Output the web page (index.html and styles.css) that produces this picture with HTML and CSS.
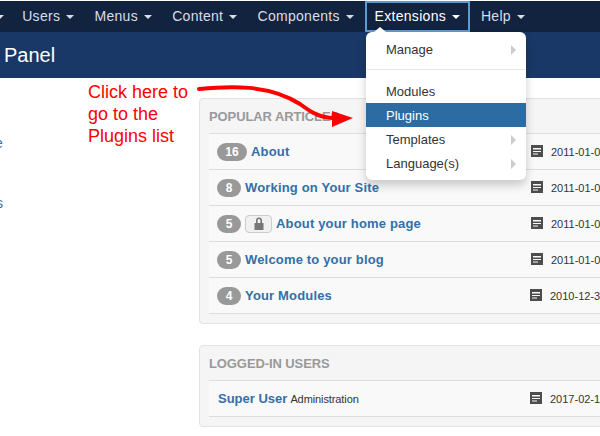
FILE: index.html
```html
<!DOCTYPE html>
<html lang="en">
<head>
<meta charset="utf-8">
<title>Control Panel</title>
<link rel="stylesheet" href="styles.css">
</head>
<body>
<div class="page">
  <nav class="nav">
    <span class="nav-stub"><b class="caret"></b></span>
    <a class="nav-item">Users <b class="caret"></b></a>
    <a class="nav-item">Menus <b class="caret"></b></a>
    <a class="nav-item">Content <b class="caret"></b></a>
    <a class="nav-item">Components <b class="caret"></b></a>
    <a class="nav-item active">Extensions <b class="caret"></b></a>
    <a class="nav-item last">Help <b class="caret"></b></a>
  </nav>
  <header class="subhead"><h1>Panel</h1></header>
  <main class="main">
    <aside class="side">
      <div class="side-a">e</div>
      <div class="side-b">s</div>
    </aside>
    <div class="content">
      <section class="panel">
        <h2>POPULAR ARTICLES</h2>
        <div class="row"><span class="row-main"><span class="badge wide">16</span><a>About</a></span><span class="date"><svg class="doc" viewBox="0 0 12 12"><use href="#news"/></svg>2011-01-01 12:00</span></div>
        <div class="row"><span class="row-main"><span class="badge">8</span><a>Working on Your Site</a></span><span class="date"><svg class="doc" viewBox="0 0 12 12"><use href="#news"/></svg>2011-01-01 12:00</span></div>
        <div class="row"><span class="row-main"><span class="badge">5</span><span class="lock"><svg viewBox="0 0 10 13"><path d="M2 6V3.500a3 3 0 0 1 6 0V6H9.500v7H.5V6zM3.600 6h2.800V3.500a1.400 1.400 0 0 0-2.800 0z" fill="#777" fill-rule="evenodd"/></svg></span><a>About your home page</a></span><span class="date"><svg class="doc" viewBox="0 0 12 12"><use href="#news"/></svg>2011-01-01 12:00</span></div>
        <div class="row"><span class="row-main"><span class="badge">5</span><a>Welcome to your blog</a></span><span class="date"><svg class="doc" viewBox="0 0 12 12"><use href="#news"/></svg>2011-01-01 12:00</span></div>
        <div class="row"><span class="row-main"><span class="badge">4</span><a>Your Modules</a></span><span class="date shift"><svg class="doc" viewBox="0 0 12 12"><use href="#news"/></svg>2010-12-31 12:00</span></div>
      </section>
      <section class="panel">
        <h2>LOGGED-IN USERS</h2>
        <div class="row user"><span class="row-main"><a>Super User</a><small>Administration</small></span><span class="date shift"><svg class="doc" viewBox="0 0 12 12"><use href="#news"/></svg>2017-02-16 12:00</span></div>
      </section>
    </div>
  </main>

  <ul class="menu">
    <li class="has-sub">Manage</li>
    <li class="divider"></li>
    <li>Modules</li>
    <li class="selected">Plugins</li>
    <li class="has-sub">Templates</li>
    <li class="has-sub">Language(s)</li>
  </ul>

  <div class="note">Click here to<br>go to the<br>Plugins list</div>
  <svg class="arrow" viewBox="0 0 170 50" width="170" height="50">
    <path d="M2 4C32 1 72 -1 103 19C115 28 124 33 137 33" fill="none" stroke="#f00" stroke-width="4" stroke-linecap="round"/>
    <path d="M135 26L156 33L135 42z" fill="#f00"/>
  </svg>
</div>
<svg width="0" height="0" class="defs"><defs>
  <g id="news"><path d="M0 0H12V12H0zM2 3V4.500H10V3zM2 6V7H10V6zM2 8.500V9.500H7V8.500z" fill="#4d4d4d" fill-rule="evenodd"/></g>
</defs></svg>
</body>
</html>
```
FILE: styles.css
```css
* { box-sizing: border-box; }
html, body { margin: 0; padding: 0; background: #fff; }
body { font-family: "Liberation Sans", Arial, sans-serif; font-size: 14px; color: #333; }
.page { position: relative; width: 600px; height: 436px; overflow: hidden; padding-top: 1px; }
.defs { position: absolute; }

.nav { display: flex; height: 31px; background: #12233f; color: #d9dee6; line-height: 30px; letter-spacing: .3px; }
.nav-stub { width: 10px; margin-left: -6px; margin-right: 8.200px; display: flex; align-items: center; }
.nav-item { display: block; padding: 0 10px; white-space: nowrap; }
.caret { display: inline-block; width: 0; height: 0; margin-left: 2px; vertical-align: middle; border-top: 4px solid currentColor; border-left: 4px solid transparent; border-right: 4px solid transparent; }
.nav-item.active { margin-left: .5px; background: #12233f; border: 2px solid #5b9bd0; color: #fff; line-height: 26px; padding: 0 8px; }
.nav-item.last { margin-left: .7px; }

.subhead { height: 46px; background: #1a3867; color: #fff; display: flex; align-items: center; padding-left: 4px; }
.subhead h1 { margin: 0; font-size: 20px; font-weight: 400; line-height: 24px; }

.main { display: flex; }
.side { width: 199px; flex: none; font-size: 14px; color: #3a6ea5; }
.side-a { margin: 57px 0 0 -5px; line-height: 16px; }
.side-b { margin: 44px 0 0 -4px; line-height: 16px; }
.content { width: 460px; flex: none; padding-top: 20px; }

.panel { background: #f5f5f5; border: 1px solid #e3e3e3; border-radius: 4px; padding: 0 9px 9px; margin-bottom: 21px; }
.panel h2 { margin: 0; height: 35px; line-height: 36px; font-size: 13px; font-weight: 700; letter-spacing: -.1px; color: #999; border-bottom: 1px solid #ddd; }
.row { height: 36px; background: #f9f9f9; border-bottom: 1px solid #ddd; padding: 0 8px; display: flex; align-items: center; white-space: nowrap; }
.row.user { padding-left: 9px; }
.row.user .row-main { width: 313px; }
.row.user a { letter-spacing: 0; }
.row-main { width: 314px; flex: none; display: flex; align-items: center; }
.row-main a { color: #336fa8; font-weight: 700; font-size: 13px; letter-spacing: .17px; }
.row-main small { font-size: 11px; letter-spacing: -.1px; color: #333; margin-left: 3px; }
.badge { width: 24px; height: 18px; border-radius: 9px; background: #999; color: #fff; font-weight: 700; font-size: 12px; line-height: 18px; text-align: center; margin-right: 4px; }
.badge.wide { width: 30px; }
.lock { width: 27px; height: 18px; margin-right: 4px; border: 1px solid #ccc; border-radius: 4px; background: #f0f0f0; display: flex; align-items: center; justify-content: center; }
.lock svg { width: 10px; height: 13px; }
.date { font-size: 11px; color: #333; display: flex; align-items: center; }
.date.shift { margin-left: -1px; }
.doc { width: 12px; height: 12px; margin: 0 8px 2px 0; }

.menu { position: absolute; left: 366px; top: 32px; width: 160px; height: 148px; margin: 0; padding: 5px 0; list-style: none; background: #fff; border-radius: 6px; box-shadow: 0 5px 10px rgba(0,0,0,.2); font-size: 13px; }
.menu::before { content: ""; position: absolute; left: 8px; top: -5px; border-left: 6px solid transparent; border-right: 6px solid transparent; border-bottom: 5px solid #fff; }
.menu li { position: relative; height: 24px; line-height: 26px; padding-left: 20px; color: #333; }
.menu li.divider { height: 1px; margin: 8px 1px 9px; padding: 0; background: #e5e5e5; }
.menu li.selected { background: #2d6ca2; color: #fff; }
.menu li.has-sub::after { content: ""; position: absolute; right: 10px; top: 8px; border-left: 5px solid #ccc; border-top: 5px solid transparent; border-bottom: 5px solid transparent; }

.note { position: absolute; left: 88px; top: 81px; font-size: 18px; line-height: 22px; color: #f00; }
.arrow { position: absolute; left: 197px; top: 85px; }
```
